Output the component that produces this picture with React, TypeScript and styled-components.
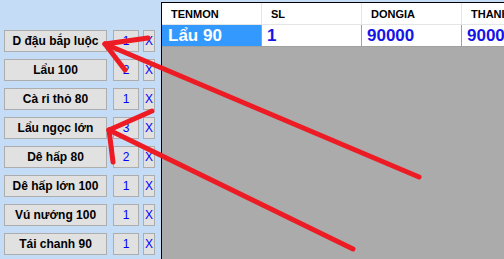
import React from "react";
import styled, { createGlobalStyle } from "styled-components";

const Global = createGlobalStyle`
  html, body { margin: 0; padding: 0; }
  body { background: #c5dcf6; font-family: "Liberation Sans", Arial, sans-serif; overflow: hidden; }
`;

const Page = styled.div`
  position: relative;
  width: 504px;
  height: 259px;
  display: flex;
  background: #c5dcf6;
  overflow: hidden;
`;

const LeftPanel = styled.div`
  width: 161px;
  flex: none;
  display: flex;
  flex-direction: column;
  gap: 7px;
  padding: 30px 0 0 4px;
  box-sizing: border-box;
`;

const Row = styled.div`
  display: flex;
  align-items: center;
  height: 22px;
`;

const WinButton = styled.div<{ $w: number; $blue?: boolean; $bold?: boolean; $ml?: number }>`
  width: ${(p) => p.$w}px;
  height: 22px;
  margin-left: ${(p) => p.$ml ?? 0}px;
  box-sizing: border-box;
  background: #e1e1e1;
  border: 1px solid #adadad;
  display: flex;
  align-items: center;
  justify-content: center;
  font-family: "Liberation Sans", Arial, sans-serif;
  font-size: 12px;
  font-weight: ${(p) => (p.$bold ? 700 : 400)};
  color: ${(p) => (p.$blue ? "#0000ff" : "#000")};
  white-space: nowrap;
  overflow: hidden;
`;

const GridArea = styled.div`
  flex: 1;
  margin-top: 2px;
  border-left: 1px solid #000;
  border-top: 1px solid #000;
  background: #ababab;
  overflow: hidden;
`;

const Table = styled.div`
  display: flex;
  flex-direction: column;
  width: 500px;
`;

const HeaderRow = styled.div`
  display: flex;
  height: 21px;
  background: #fff;
  border-bottom: 1px solid #e5e5e5;
`;

const HeaderCell = styled.div`
  width: 100px;
  flex: none;
  box-sizing: border-box;
  border-right: 1px solid #e5e5e5;
  padding-left: 9px;
  display: flex;
  align-items: center;
  font-size: 11px;
  font-weight: 700;
  color: #000;
`;

const DataRow = styled.div`
  display: flex;
  height: 21px;
  border-bottom: 1px solid #a0a0a0;
`;

const DataCell = styled.div<{ $selected?: boolean }>`
  width: 100px;
  flex: none;
  box-sizing: border-box;
  border-right: 1px solid #a0a0a0;
  padding-left: ${(p) => (p.$selected ? 6 : 5)}px;
  display: flex;
  align-items: center;
  font-size: 17px;
  font-weight: 700;
  background: ${(p) => (p.$selected ? "#3399ff" : "#fff")};
  color: ${(p) => (p.$selected ? "#fff" : "#1515e8")};
  white-space: nowrap;
  overflow: hidden;
`;

const Overlay = styled.svg`
  position: absolute;
  left: 0;
  top: 0;
  pointer-events: none;
`;

const items = [
  { name: "D đậu bắp luộc", qty: 1 },
  { name: "Lẩu 100", qty: 2 },
  { name: "Cà ri thỏ 80", qty: 1 },
  { name: "Lẩu ngọc lớn", qty: 3 },
  { name: "Dê hấp 80", qty: 2 },
  { name: "Dê hấp lớn 100", qty: 1 },
  { name: "Vú nướng 100", qty: 1 },
  { name: "Tái chanh 90", qty: 1 },
];

const columns = ["TENMON", "SL", "DONGIA", "THANHTIEN", ""];
const data = ["Lẩu 90", "1", "90000", "90000", ""];

export default function App() {
  return (
    <>
      <Global />
      <Page>
        <LeftPanel>
          {items.map((it) => (
            <Row key={it.name}>
              <WinButton $w={103} $bold>{it.name}</WinButton>
              <WinButton $w={26} $ml={6} $blue>{it.qty}</WinButton>
              <WinButton $w={12} $ml={4} $blue>X</WinButton>
            </Row>
          ))}
        </LeftPanel>
        <GridArea>
          <Table>
            <HeaderRow>
              {columns.map((c, i) => (
                <HeaderCell key={i}>{c}</HeaderCell>
              ))}
            </HeaderRow>
            <DataRow>
              {data.map((d, i) => (
                <DataCell key={i} $selected={i === 0}>{d}</DataCell>
              ))}
            </DataRow>
          </Table>
        </GridArea>
        <Overlay width={504} height={259} viewBox="0 0 504 259">
          <g stroke="#ed1c24" strokeWidth={5} strokeLinecap="round" fill="none">
            <line x1={105} y1={44} x2={148} y2={38} />
            <line x1={105} y1={44} x2={125} y2={70} />
            <line x1={105} y1={44} x2={419} y2={177} />
            <line x1={109} y1={130} x2={152} y2={111} />
            <line x1={109} y1={130} x2={113} y2={162} />
            <line x1={109} y1={130} x2={353} y2={249} />
          </g>
        </Overlay>
      </Page>
    </>
  );
}
